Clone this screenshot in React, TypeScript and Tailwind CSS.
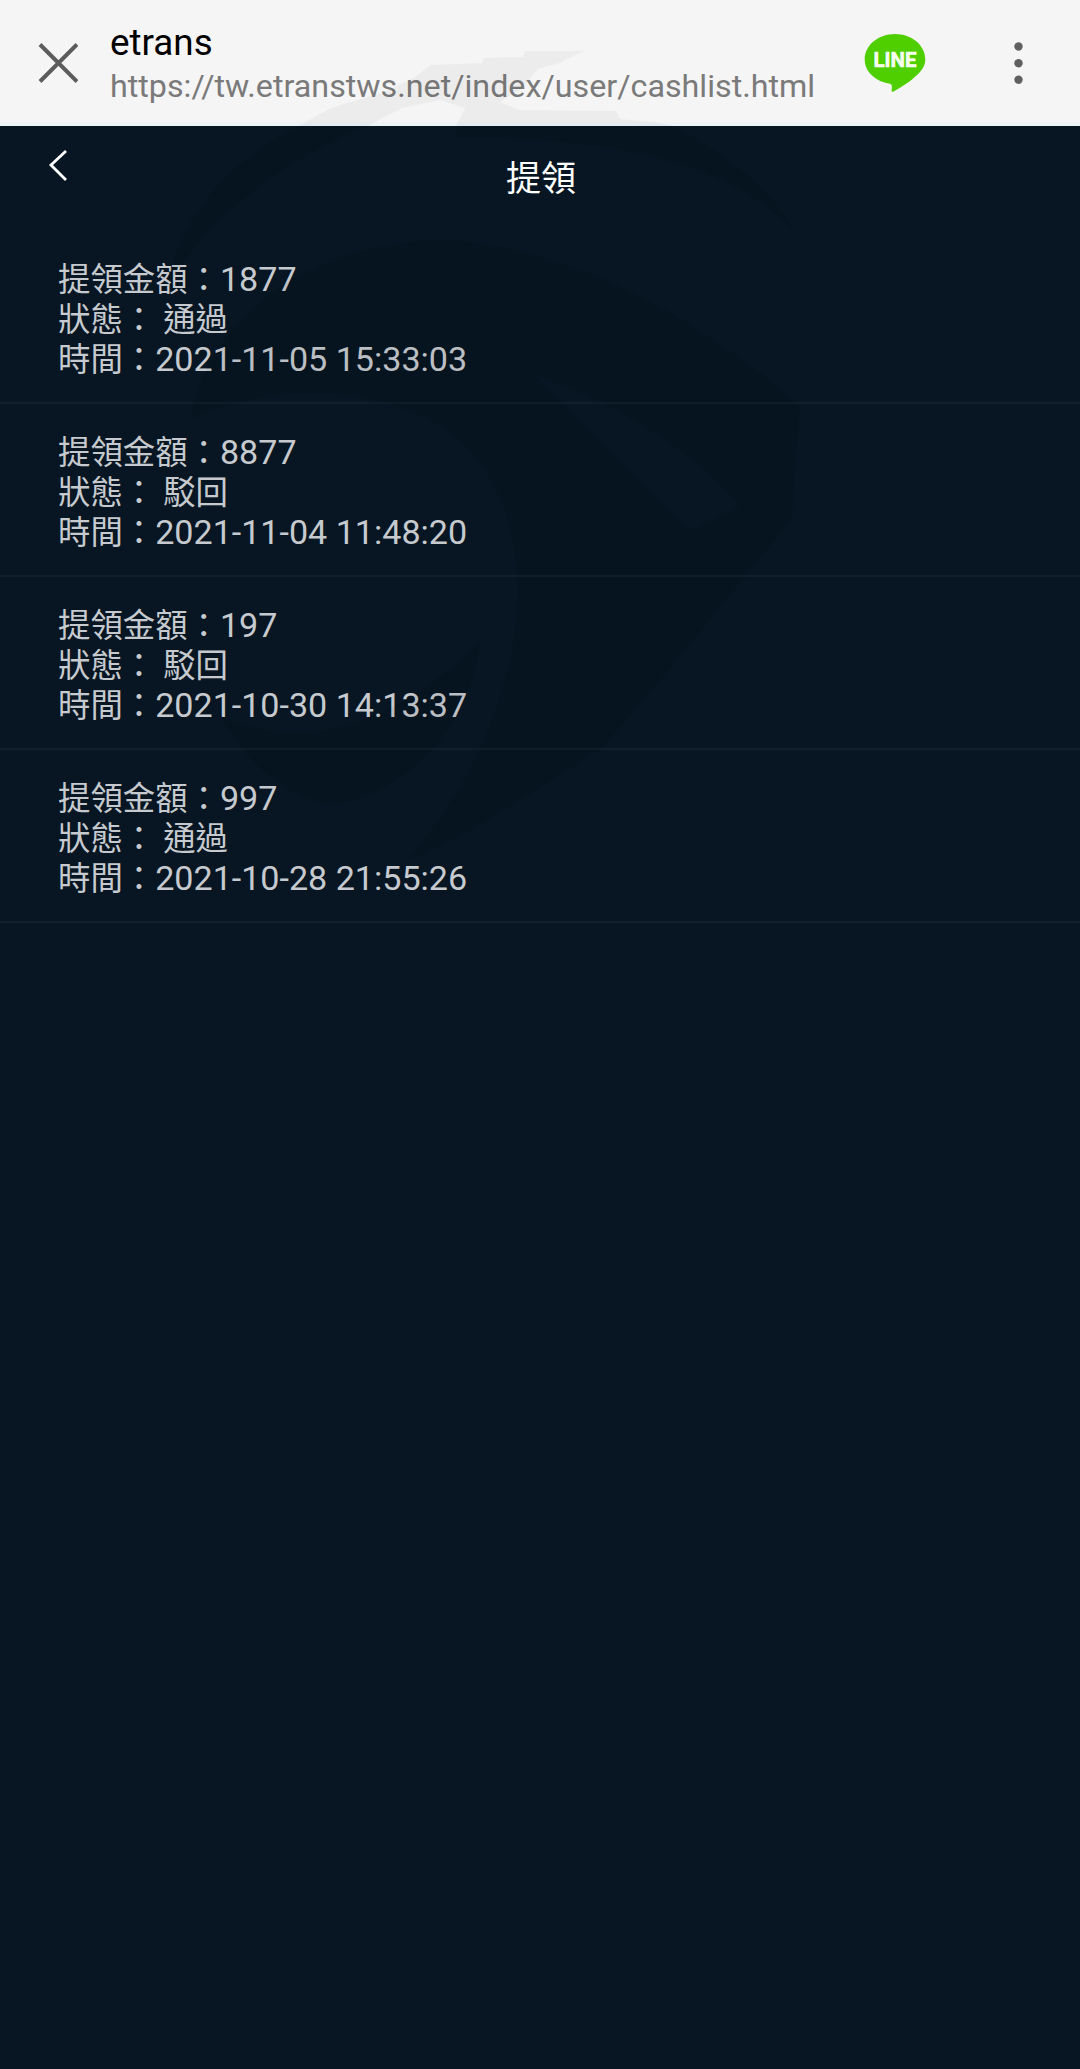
type Withdrawal = {
  amount: string
  status: string
  time: string
}

const withdrawals: Withdrawal[] = [
  { amount: '1877', status: '通過', time: '2021-11-05 15:33:03' },
  { amount: '8877', status: '駁回', time: '2021-11-04 11:48:20' },
  { amount: '197', status: '駁回', time: '2021-10-30 14:13:37' },
  { amount: '997', status: '通過', time: '2021-10-28 21:55:26' },
]

const LineLogo = () => (
  <svg className="h-[60px] w-[62px]" viewBox="0 0 62 60" aria-label="LINE">
    <path
      d="M31 1C14.500 1 .7 12 .7 26.500c0 12 10.300 21.500 24.300 24 2.700.5 3 1.600 2.800 3.600l-.2 3.400c0 1.200.8 1.600 1.900 1 8-4.200 17-10 23.500-16.400C58.500 37 61.300 32 61.300 26.500 61.300 12 47.500 1 31 1z"
      fill="#4fce00"
    />
    <text
      x="31"
      y="33.500"
      textAnchor="middle"
      textLength="43"
      lengthAdjust="spacingAndGlyphs"
      fill="#f5fff0"
      stroke="#f5fff0"
      strokeWidth="0.600"
      className="font-[Roboto] text-[20.500px] font-bold"
    >
      LINE
    </text>
  </svg>
)

const BrowserBar = () => (
  <header className="flex h-[126px] items-start border-b-4 border-[#eef3f8] bg-[#f5f5f5]">
    <button className="ml-[38px] mt-[43px]" type="button" aria-label="Close">
      <svg className="h-10 w-10" viewBox="0 0 40 40" fill="none" stroke="#5c5c5c" strokeWidth="4">
        <path d="M2 1.500 39 38.500M39 1.500 2 38.500" />
      </svg>
    </button>
    <div className="ml-8 mt-[21px] w-[754px] whitespace-nowrap">
      <h1 className="text-[36.800px] leading-[43px] text-black">etrans</h1>
      <p className="text-[32.250px] leading-[45px] text-[#7a7a7a]">
        https://tw.etranstws.net/index/user/cashlist.html
      </p>
    </div>
    <div className="mt-[33px]">
      <LineLogo />
    </div>
    <button className="ml-[88px] mt-[42px]" type="button" aria-label="More">
      <svg className="h-[42px] w-[9px]" viewBox="0 0 9 42" fill="#606060">
        <circle cx="4.500" cy="4.500" r="4.200" />
        <circle cx="4.500" cy="21.200" r="4.200" />
        <circle cx="4.500" cy="37.700" r="4.200" />
      </svg>
    </button>
  </header>
)

const WithdrawalRow = ({ amount, status, time }: Withdrawal) => (
  <li className="h-[173px] border-b-2 border-[#101f2b] pl-[58px] pt-[28px] text-[32.400px] leading-[40px] text-[#c6cacf]">
    <p className="h-10 whitespace-pre">
      提領金額：<span className="text-[34.100px]">{amount}</span>
    </p>
    <p className="h-10 whitespace-pre leading-[42px]">狀態： {status}</p>
    <p className="h-10 whitespace-pre">
      時間：<span className="text-[34.100px]">{time}</span>
    </p>
  </li>
)

// Faint swirl laid over both the browser bar and the page
const Watermark = () => (
  <svg
    className="pointer-events-none absolute left-0 top-0 h-[1000px] w-[1080px]"
    viewBox="0 0 1080 1000"
    fill="#000"
    aria-hidden="true"
  >
    <g opacity="0.035">
      <path d="M298 126 333 107 385 92 415 77 430 65 482 63 484 58 523 57 525 51 584 51 571 57 560 63 538 69 520 90 500 102 520 110 616 111 620 119 655 122 674 126H456L465 108 440 100 402 108 385 117 368 126z" />
    </g>
    <g opacity="0.050">
      <path d="M298 126C230 160 180 215 165 290 200 230 270 165 368 126z" />
      <path d="M456 126H674C720 150 775 190 794 232 735 170 640 138 456 138z" />
      <path d="M190 420C210 310 320 238 450 240 600 250 730 345 800 405L792 520C740 580 690 650 600 750 520 800 470 835 405 862 450 810 490 750 512 650 530 540 500 460 430 420 360 385 260 385 190 420zM536 376C590 430 650 490 690 530L740 505C690 450 620 405 536 376z" fillRule="evenodd" />
      <path d="M220 715C290 750 390 735 480 640 470 740 390 800 330 805 280 795 245 760 220 715z" />
    </g>
  </svg>
)

export default function App() {
  return (
    <div className="relative min-h-[2069px] w-[1080px] overflow-hidden bg-[#071622] font-[Roboto,'Noto_Sans_CJK_TC',sans-serif]">
      <BrowserBar />
      <nav className="grid h-[105px] grid-cols-[1fr_auto_1fr] items-start text-white">
        <button className="ml-[47px] mt-[23px] w-6" type="button" aria-label="Back">
          <svg className="h-8 w-6" viewBox="0 0 24 32" fill="none" stroke="currentColor" strokeWidth="2.800">
            <path d="M19 2 4 16l15 15" />
          </svg>
        </button>
        <h2 className="mt-8 pl-0.5 text-[35px] leading-[44px]">提領</h2>
      </nav>
      <ul>
        {withdrawals.map((item) => (
          <WithdrawalRow key={item.time} {...item} />
        ))}
      </ul>
      <Watermark />
    </div>
  )
}
